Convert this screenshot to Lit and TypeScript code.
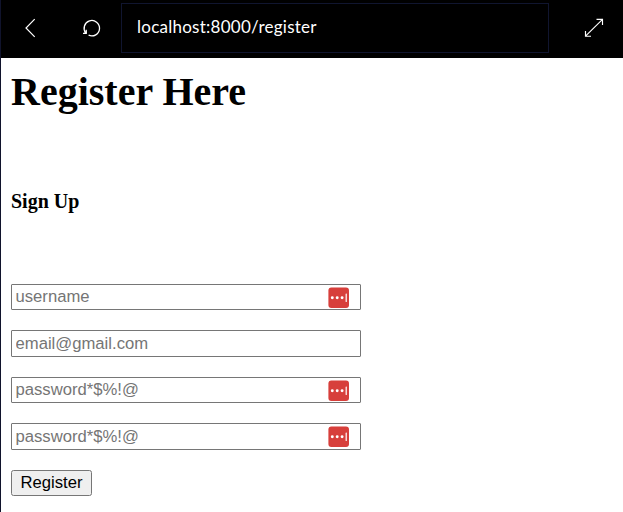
import { LitElement, html, css } from "lit";
import { customElement, property } from "lit/decorators.js";

@customElement("browser-bar")
class BrowserBar extends LitElement {
  @property() url = "";

  static styles = css`
    :host {
      display: grid;
      grid-template-columns: 60px 60px 428px 1fr;
      height: 58px;
      box-sizing: border-box;
      background: #000;
      align-items: start;
    }
    .cell { height: 56px; }
    svg { display: block; fill: none; stroke: #fff; }
    .address {
      box-sizing: border-box;
      height: 50px;
      margin-top: 3px;
      border: 1px solid #10152f;
      padding-left: 15px;
      color: #fff;
      font: 17px/46px Lato, "Open Sans", sans-serif;
      letter-spacing: 0.25px;
      white-space: nowrap;
    }
  `;

  render() {
    return html`
      <div class="cell">
        <svg width="60" height="56" stroke-width="1.2"><path d="M33.7 19.2 25 28 33.7 36.8" /></svg>
      </div>
      <div class="cell">
        <svg width="60" height="56" stroke-width="1.3">
          <path d="M24.8 33A7.7 7.7 0 1 1 27.6 35.2" />
          <path d="M22 33.3H25.2V29.8" />
          <path d="M22.6 33.6H25.6V30.8Z" fill="#fff" stroke="none" />
        </svg>
      </div>
      <div class="address">${this.url}</div>
      <div class="cell">
        <svg width="74" height="56" stroke-width="1.15">
          <path d="M36.5 36.2 53.5 19.4M47.5 19.4H53.5V25M36.5 31V36.2H42" />
        </svg>
      </div>
    `;
  }
}

@customElement("form-field")
class FormField extends LitElement {
  @property() placeholder = "";
  @property({ type: Boolean }) manager = false;
  @property() type = "text";

  static styles = css`
    :host { display: flex; position: relative; width: 350px; }
    input {
      box-sizing: border-box;
      width: 100%;
      height: 100%;
      margin: 0;
      padding: 0 3.5px;
      border: 1px solid #767676;
      border-radius: 1px;
      background: #fff;
      outline: none;
      font: 16.67px "Liberation Sans", Arial, sans-serif;
    }
    input::placeholder { color: #757575; opacity: 1; }
    .badge { position: absolute; right: 12px; top: 3px; }
  `;

  render() {
    return html`
      <input type=${this.type} placeholder=${this.placeholder} />
      ${this.manager
        ? html`<svg class="badge" width="21" height="21" viewBox="0 0 21 21">
            <rect x=".4" y=".4" width="20.6" height="20.6" rx="3" fill="#d73f3b" />
            <g fill="#fff">
              <circle cx="4.3" cy="10.7" r="1.45" />
              <circle cx="9.2" cy="10.7" r="1.45" />
              <circle cx="14.1" cy="10.7" r="1.45" />
              <rect x="17.6" y="6.5" width="1.2" height="8.5" rx=".5" />
            </g>
          </svg>`
        : ""}
    `;
  }
}

@customElement("app-root")
class AppRoot extends LitElement {
  static styles = css`
    :host {
      display: block;
      box-sizing: border-box;
      width: 623px;
      height: 512px;
      overflow: hidden;
      border-left: 1px solid #10132c;
      background: #fff;
      color: #000;
    }
    main { padding-left: 10px; font-family: "Liberation Serif", "Times New Roman", serif; }
    h1 { margin: 0; padding-top: 10px; font-size: 40px; line-height: 47px; }
    h4 { margin: 74px 0 0; font-size: 20px; line-height: 24px; }
    form {
      display: grid;
      grid-template-rows: 26px 27px 26px 27px 26px;
      row-gap: 20px;
      margin-top: 71px;
    }
    button {
      box-sizing: border-box;
      width: 81px;
      height: 26px;
      margin: 0;
      padding: 0;
      border: 1px solid #767676;
      border-radius: 2.5px;
      background: #efefef;
      color: #000;
      font: 16.67px "Liberation Sans", Arial, sans-serif;
    }
  `;

  render() {
    return html`
      <browser-bar url="localhost:8000/register"></browser-bar>
      <main>
        <h1>Register Here</h1>
        <h4>Sign Up</h4>
        <form>
          <form-field placeholder="username" manager></form-field>
          <form-field placeholder="email@gmail.com"></form-field>
          <form-field type="password" placeholder="password*$%!@" manager></form-field>
          <form-field type="password" placeholder="password*$%!@" manager></form-field>
          <button type="button">Register</button>
        </form>
      </main>
    `;
  }
}
